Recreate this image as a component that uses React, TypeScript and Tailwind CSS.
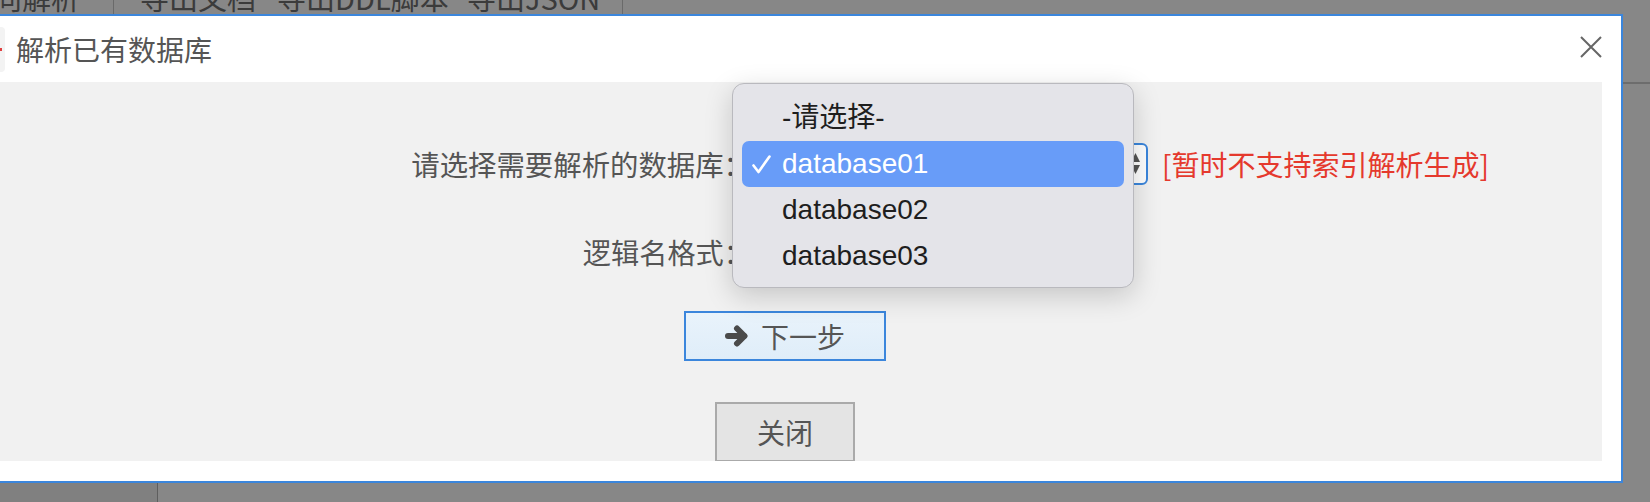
import React from "react";

const cjk = "font-['Noto_Sans_CJK_SC',sans-serif]";

function TopStrip() {
  return (
    <div className="h-[14px] overflow-hidden flex text-[29px] leading-[29px] text-[#3b3b3b]">
      <div className="flex items-start -mt-[17px]">
        <span className="-ml-[7px] w-[120px]">向解析</span>
        <span className="w-px h-[40px] bg-[#6a6a6a]" />
        <span className="ml-[26px] w-[137px]">导出文档</span>
        <span className="w-[190px]">导出DDL脚本</span>
        <span className="w-[155px]">导出JSON</span>
        <span className="w-px h-[40px] bg-[#6a6a6a]" />
      </div>
    </div>
  );
}

function Stepper() {
  return (
    <svg width="9" height="22" viewBox="0 0 9 22" className="absolute right-[6px] top-[8px]">
      <polygon points="4.5,0 9,9 0,9" fill="#555" />
      <polygon points="0,12 9,12 4.5,21" fill="#555" />
    </svg>
  );
}

function Dropdown() {
  const items = ["-请选择-", "database01", "database02", "database03"];
  return (
    <div className="absolute left-[732px] top-[83px] w-[402px] h-[205px] rounded-[12px] bg-[#e4e4e9] border border-[#b9b9be] shadow-[0_8px_28px_rgba(0,0,0,0.18)] px-[9px] pt-[11px] font-['Liberation_Sans','Noto_Sans_CJK_SC',sans-serif] text-[28px]">
      {items.map((it, i) => (
        <div
          key={it}
          className={
            i === 1
              ? "relative h-[46px] flex items-center rounded-[7px] bg-[#689cf8] text-white pl-[40px]"
              : "relative h-[46px] flex items-center rounded-[7px] text-[#1e1e1e] pl-[40px]"
          }
        >
          {i === 1 && (
            <svg width="19" height="19" viewBox="0 0 19 19" className="absolute left-[10px] top-[14px]">
              <path d="M1.5 10.5 L6.5 17 L17.5 1.5" fill="none" stroke="#fff" strokeWidth="2.6" strokeLinecap="round" strokeLinejoin="round" />
            </svg>
          )}
          <span className="leading-none">{it}</span>
        </div>
      ))}
    </div>
  );
}

function ArrowIcon() {
  return (
    <svg width="24" height="22" viewBox="0 0 24 22">
      <path d="M3 11 H19" stroke="#4a4a4a" strokeWidth="6" strokeLinecap="round" fill="none" />
      <path d="M12 3.5 L19.5 11 L12 18.5" stroke="#4a4a4a" strokeWidth="6" strokeLinecap="round" strokeLinejoin="round" fill="none" />
    </svg>
  );
}

function Dialog() {
  return (
    <div className="w-[1623px] h-[469px] border-y-2 border-r-2 border-[#3b86dc] bg-white flex flex-col">
      <div className="h-[66px] flex items-center justify-between pr-[19px]">
        <div className="flex items-center">
          <div className="w-[5px] h-[45px] bg-[#f3f3f3] rounded-r-[4px] flex items-center">
            <div className="w-[2px] h-[3px] bg-[#e04040]" />
          </div>
          <span className="ml-[11px] text-[28px] leading-none text-[#555]">解析已有数据库</span>
        </div>
        <svg width="22" height="22" viewBox="0 0 22 22" className="-mt-[5px]">
          <path d="M1 1 L21 21 M21 1 L1 21" stroke="#666" strokeWidth="2" fill="none" />
        </svg>
      </div>
      <div className="h-[379px] mr-[19px] bg-[#f1f1f1] overflow-hidden flex flex-col">
        <div className="mt-[61px] h-[42px] flex items-center">
          <div className="w-[752px] text-right text-[28.4px] leading-none text-[#555]">请选择需要解析的数据库：</div>
          <div className="relative w-[396px] h-[42px] border-2 border-[#3b86dc] rounded-[6px] bg-white">
            <Stepper />
          </div>
          <span className="ml-[14px] text-[28px] leading-none text-[#e5392d]">[暂时不支持索引解析生成]</span>
        </div>
        <div className="mt-[46px] h-[42px] flex items-center">
          <div className="w-[752px] text-right text-[28.2px] leading-none text-[#555]">逻辑名格式：</div>
          <div className="relative w-[340px] h-[42px] border-2 border-[#aaa] rounded-[6px] bg-white" />
        </div>
        <div className="w-[1570px] flex flex-col items-center">
          <button className="mt-[38px] w-[202px] h-[50px] border-2 border-[#3b86dc] bg-gradient-to-b from-[#e9f3fb] to-[#dfedf9] flex items-center justify-center text-[28px] leading-none text-[#555]">
            <ArrowIcon />
            <span className="ml-[12px]">下一步</span>
          </button>
          <button className="mt-[41px] w-[140px] h-[60px] border-2 border-[#aaa] bg-[#e4e4e4] flex items-center justify-center text-[28px] leading-none text-[#555]">
            关闭
          </button>
        </div>
      </div>
    </div>
  );
}

export default function App() {
  return (
    <div className={`relative w-[1650px] h-[502px] overflow-hidden bg-[#878787] ${cjk}`}>
      <TopStrip />
      <div className="flex h-[469px]">
        <Dialog />
        <div className="flex-1 flex flex-col">
          <div className="h-[68px]" />
          <div className="h-[2px] bg-[#6d6d6d]" />
        </div>
      </div>
      <div className="flex h-[19px]">
        <div className="w-[158px] bg-[#808080] border-r border-[#5e5e5e]" />
      </div>
      <Dropdown />
    </div>
  );
}
